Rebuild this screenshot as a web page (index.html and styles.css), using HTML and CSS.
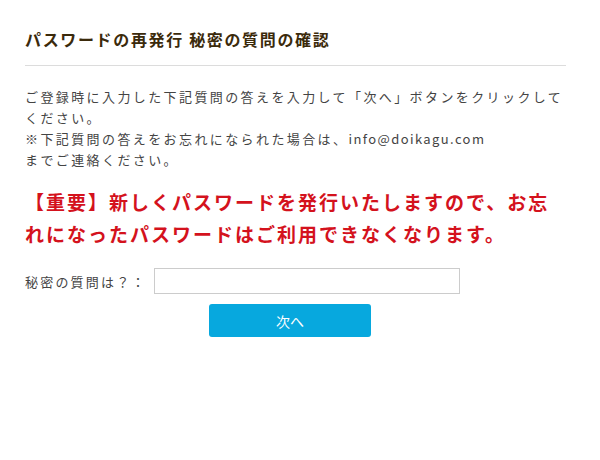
FILE: index.html
```html
<!DOCTYPE html>
<html lang="ja">
<head>
    <meta charset="UTF-8">
    <title>パスワードの再発行 秘密の質問の確認</title>
    <link rel="stylesheet" href="styles.css">
</head>
<body>
<div class="container">
    <h1 class="page-title">パスワードの再発行 秘密の質問の確認</h1>

    <p class="intro">
        ご登録時に入力した下記質問の答えを入力して「次へ」ボタンをクリックしてください。<br>
        ※下記質問の答えをお忘れになられた場合は、<span class="mail">info@doikagu.com</span><br>
        までご連絡ください。
    </p>

    <p class="notice">【重要】新しくパスワードを発行いたしますので、お忘れになったパスワードはご利用できなくなります。</p>

    <form class="question-form" onsubmit="return false;">
        <div class="form-row">
            <label for="answer">秘密の質問は？：</label>
            <input type="text" id="answer" />
        </div>
        <div class="button-row">
            <button type="submit">次へ</button>
        </div>
    </form>
</div>
</body>
</html>
```

FILE: styles.css
```css
body {
    margin: 0;
    font-family: "Noto Sans CJK JP", "Noto Sans", sans-serif;
    background-color: #fff;
    color: #444;
}

.container {
    width: 541px;
    padding: 27px 0 0 25px;
}

.page-title {
    margin: 0;
    padding-bottom: 14px;
    font-size: 16px;
    font-weight: bold;
    letter-spacing: 1.65px;
    color: #3b2a0b;
    border-bottom: 1px solid #dcdcdc;
}

.intro {
    margin: 20px 0 0;
    font-size: 13px;
    line-height: 21px;
    letter-spacing: 2.4px;
}

.intro .mail {
    letter-spacing: 1.4px;
}

.notice {
    margin: 16px 0 0;
    font-size: 19px;
    font-weight: bold;
    line-height: 32px;
    letter-spacing: 2px;
    color: #d4121d;
}

.question-form {
    margin-top: 18px;
}

.form-row {
    display: flex;
    align-items: center;
}

.form-row label {
    width: 129px;
    font-size: 13px;
    letter-spacing: 2.2px;
}

.form-row input {
    width: 306px;
    height: 26px;
    box-sizing: border-box;
    border: 1px solid #ccc;
    padding: 0 6px;
}

.button-row {
    margin: 10px 0 0 184px;
}

.button-row button {
    width: 162px;
    height: 33px;
    border: none;
    border-radius: 3px;
    background-color: #07a8de;
    color: #fff;
    font-family: inherit;
    font-size: 14px;
}
```
